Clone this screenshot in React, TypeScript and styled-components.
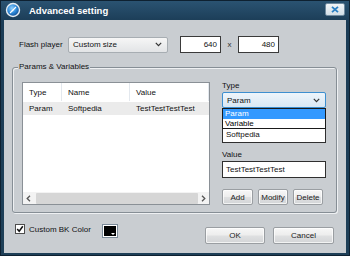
import React from 'react';
import styled, { createGlobalStyle } from 'styled-components';

const GlobalStyle = createGlobalStyle`
  html, body {
    margin: 0;
    padding: 0;
  }
  body {
    width: 350px;
    height: 256px;
    overflow: hidden;
    background: #1d3d55;
    font-family: "Liberation Sans", Arial, sans-serif;
    font-size: 8px;
    color: #111;
  }
`;

const Frame = styled.div`
  width: 350px;
  height: 256px;
  box-sizing: border-box;
  display: flex;
  flex-direction: column;
  background: linear-gradient(#2b5473, #1b3c56 22px, #1e3f57);
  box-shadow: inset 0 0 0 1px #0e2131;
`;

const TitleBar = styled.div`
  height: 20px;
  flex: none;
  display: flex;
  align-items: center;
  padding-left: 5px;
`;

const TitleText = styled.span`
  margin-left: 8px;
  color: #fff;
  font-size: 9.5px;
  font-weight: bold;
`;

const CloseButton = styled.div`
  margin-left: auto;
  margin-right: 5px;
  align-self: flex-start;
  margin-top: 3px;
  width: 20px;
  height: 13px;
  box-sizing: border-box;
  border: 1px solid #6f8a9f;
  border-radius: 2px;
  background: linear-gradient(#f1f5f8, #d2dee7);
  display: flex;
  align-items: center;
  justify-content: center;
`;

const Body = styled.div`
  flex: 1;
  margin: 0 4px 3px 4px;
  background: #c9cdd1;
  display: flex;
  flex-direction: column;
  padding-top: 16px;
`;

const TopRow = styled.div`
  display: flex;
  align-items: center;
  height: 17px;
  padding-left: 15px;
`;

const Label = styled.span<{ $width?: number }>`
  width: ${(p) => (p.$width ? `${p.$width}px` : 'auto')};
  white-space: nowrap;
  line-height: 11px;
`;

const LabelSpace = styled.div`
  height: 11px;
`;

const Combo = styled.div<{ $width: number; $focused?: boolean }>`
  width: ${(p) => p.$width}px;
  height: 16px;
  box-sizing: border-box;
  border: 1px solid ${(p) => (p.$focused ? '#3d8fd0' : '#a7adb2')};
  border-radius: 2px;
  background: ${(p) =>
    p.$focused ? 'linear-gradient(#eef5fb, #d9e8f4)' : 'linear-gradient(#f6f6f6, #e2e4e6)'};
  display: flex;
  align-items: center;
  padding: 0 5px 0 4px;
  justify-content: space-between;
`;

const NumInput = styled.div<{ $gapLeft?: number }>`
  width: 41px;
  height: 17px;
  margin-left: ${(p) => p.$gapLeft ?? 0}px;
  box-sizing: border-box;
  border: 1px solid #3a3a3a;
  background: #fff;
  display: flex;
  align-items: center;
  justify-content: flex-end;
  padding-right: 3px;
`;

const Times = styled.span`
  width: 17px;
  text-align: center;
  color: #333;
`;

const Group = styled.div`
  position: relative;
  margin: 14px 0 0 8px;
  width: 325px;
  height: 146px;
  box-sizing: border-box;
  border: 1px solid #868e95;
  border-radius: 3px;
  box-shadow: inset 1px 1px 0 #eef0f2, 1px 1px 0 #eef0f2;
  display: flex;
  align-items: flex-start;
  padding: 14px 0 0 9px;
`;

const Legend = styled.span`
  position: absolute;
  top: -6px;
  left: 5px;
  padding: 0 1px;
  background: #c9cdd1;
  line-height: 10px;
`;

const ListView = styled.div`
  width: 188px;
  height: 123px;
  box-sizing: border-box;
  border: 1px solid #8a9096;
  background: #fff;
  display: flex;
  flex-direction: column;
`;

const ListRow = styled.div<{ $header?: boolean }>`
  display: flex;
  height: ${(p) => (p.$header ? 18 : 13)}px;
  margin-top: ${(p) => (p.$header ? 0 : 1)}px;
  background: ${(p) => (p.$header ? '#fff' : '#ebebeb')};
  flex: none;
`;

const Cell = styled.div<{ $width: number; $header?: boolean }>`
  width: ${(p) => p.$width}px;
  flex: none;
  box-sizing: border-box;
  padding-left: 6px;
  display: flex;
  align-items: center;
  white-space: nowrap;
  overflow: hidden;
  border-right: ${(p) => (p.$header ? '1px solid #e3e8ee' : 'none')};
`;

const ListFill = styled.div`
  flex: 1;
`;

const HScroll = styled.div`
  height: 12px;
  flex: none;
  background: #f3f3f3;
  display: flex;
  align-items: center;
  padding: 0 3px;
`;

const Thumb = styled.div`
  flex: 1;
  height: 11px;
  margin: 0 3px 0 5px;
  background: #d6d6d6;
  border-radius: 1px;
`;

const RightCol = styled.div`
  width: 104px;
  margin-left: 12px;
  margin-top: -2px;
  display: flex;
  flex-direction: column;
`;

const Field = styled.div<{ $top?: number }>`
  position: relative;
  margin-top: ${(p) => p.$top ?? 0}px;
  display: flex;
  flex-direction: column;
  gap: 1px;
`;

const TextBox = styled.div`
  height: 17px;
  box-sizing: border-box;
  border: 1px solid #2f2f2f;
  background: #fff;
  display: flex;
  align-items: center;
  padding-left: 3px;
`;

const DropList = styled.div`
  position: absolute;
  left: 0;
  top: 28px;
  width: 104px;
  box-sizing: border-box;
  border: 1px solid #1a1a1a;
  background: #fff;
  z-index: 2;
`;

const DropItem = styled.div<{ $selected?: boolean }>`
  height: 9.5px;
  line-height: 9.5px;
  padding-left: 2px;
  background: ${(p) => (p.$selected ? '#3399ff' : '#fff')};
  color: ${(p) => (p.$selected ? '#fff' : '#000')};
`;

const ButtonRow = styled.div`
  display: flex;
  gap: 5px;
  margin-top: 11px;
`;

const Button = styled.div<{ $width: number; $height?: number }>`
  width: ${(p) => p.$width}px;
  height: ${(p) => p.$height ?? 16}px;
  box-sizing: border-box;
  border: 1px solid #9a9ea2;
  border-radius: 2px;
  background: linear-gradient(#f7f7f7 0%, #ededed 48%, #dfe0e1 52%, #d3d5d7 100%);
  box-shadow: inset 0 0 0 1px rgba(255, 255, 255, 0.7);
  display: flex;
  align-items: center;
  justify-content: center;
  color: #222;
`;

const BottomRow = styled.div`
  display: flex;
  align-items: flex-start;
  margin-top: 11px;
  padding: 0 12px 0 11px;
`;

const CheckGroup = styled.div`
  display: flex;
  align-items: center;
  height: 14px;
`;

const CheckBox = styled.div`
  width: 10px;
  height: 10px;
  box-sizing: border-box;
  border: 1px solid #4d4d4d;
  background: #fff;
  display: flex;
  align-items: center;
  justify-content: center;
  margin-top: -4px;
`;

const CheckLabel = styled.span`
  margin-left: 4px;
  margin-top: -3px;
`;

const Swatch = styled.div`
  position: relative;
  margin-left: 11px;
  width: 16px;
  height: 14px;
  box-sizing: border-box;
  border: 1px solid #7b8a98;
  background: #fff;
  padding: 1px;
`;

const SwatchFill = styled.div`
  width: 100%;
  height: 100%;
  background: #000;
`;

const SwatchArrow = styled.div`
  position: absolute;
  right: 2px;
  bottom: 2px;
  width: 0;
  height: 0;
  border-left: 2px solid transparent;
  border-right: 2px solid transparent;
  border-top: 2px solid #fff;
`;

const DialogButtons = styled.div`
  margin-left: auto;
  margin-top: 3px;
  display: flex;
  gap: 8px;
`;

const Chevron = () => (
  <svg width="7" height="5" viewBox="0 0 7 5">
    <path d="M0.8 0.8 L3.5 3.6 L6.2 0.8" fill="none" stroke="#333" strokeWidth="1.2" />
  </svg>
);

const AppIcon = () => (
  <svg width="16" height="16" viewBox="0 0 16 16">
    <defs>
      <radialGradient id="ig" cx="40%" cy="35%" r="70%">
        <stop offset="0%" stopColor="#8fd0ff" />
        <stop offset="60%" stopColor="#2b86d6" />
        <stop offset="100%" stopColor="#144f92" />
      </radialGradient>
    </defs>
    <circle cx="8" cy="8" r="7.2" fill="#e8eef3" />
    <circle cx="8" cy="8" r="5.8" fill="url(#ig)" />
    <path d="M5 11 L11 5" stroke="#fff" strokeWidth="1.1" />
    <path d="M5 11 L7.6 7.4 L8.6 8.4 Z" fill="#fff" />
  </svg>
);

const CloseGlyph = () => (
  <svg width="8" height="7" viewBox="0 0 8 7">
    <path d="M1 0.8 L7 6.2 M7 0.8 L1 6.2" stroke="#2a7fc4" strokeWidth="1.8" />
  </svg>
);

const CheckMark = () => (
  <svg width="8" height="8" viewBox="0 0 8 8">
    <path d="M1.2 4 L3.2 6.3 L6.8 1.2" fill="none" stroke="#111" strokeWidth="1.5" />
  </svg>
);

const ScrollArrow = ({ dir }: { dir: 'left' | 'right' }) => (
  <svg width="5" height="7" viewBox="0 0 5 7">
    <path
      d={dir === 'left' ? 'M4 0.8 L1.2 3.5 L4 6.2' : 'M1 0.8 L3.8 3.5 L1 6.2'}
      fill="none"
      stroke="#555"
      strokeWidth="1.3"
    />
  </svg>
);

const columns = [
  { key: 'type', title: 'Type', width: 39 },
  { key: 'name', title: 'Name', width: 68 },
  { key: 'value', title: 'Value', width: 79 },
];

const rows = [{ type: 'Param', name: 'Softpedia', value: 'TestTestTestTest' }];

const App: React.FC = () => (
  <>
    <GlobalStyle />
    <Frame>
      <TitleBar>
        <AppIcon />
        <TitleText>Advanced setting</TitleText>
        <CloseButton>
          <CloseGlyph />
        </CloseButton>
      </TitleBar>
      <Body>
        <TopRow>
          <Label $width={49}>Flash player</Label>
          <Combo $width={100}>
            <span>Custom size</span>
            <Chevron />
          </Combo>
          <NumInput $gapLeft={12}>640</NumInput>
          <Times>x</Times>
          <NumInput>480</NumInput>
        </TopRow>

        <Group>
          <Legend>Params &amp; Variables</Legend>
          <ListView>
            <ListRow $header>
              {columns.map((c) => (
                <Cell key={c.key} $width={c.width} $header>
                  {c.title}
                </Cell>
              ))}
            </ListRow>
            {rows.map((r, i) => (
              <ListRow key={i}>
                {columns.map((c) => (
                  <Cell key={c.key} $width={c.width}>
                    {r[c.key as keyof typeof r]}
                  </Cell>
                ))}
              </ListRow>
            ))}
            <ListFill />
            <HScroll>
              <ScrollArrow dir="left" />
              <Thumb />
              <ScrollArrow dir="right" />
            </HScroll>
          </ListView>

          <RightCol>
            <Field>
              <Label>Type</Label>
              <Combo $width={104} $focused>
                <span>Param</span>
                <Chevron />
              </Combo>
              <DropList>
                <DropItem $selected>Param</DropItem>
                <DropItem>Variable</DropItem>
              </DropList>
            </Field>
            <Field $top={6}>
              {/* the "Name" label sits under the open drop-down list */}
              <LabelSpace />
              <TextBox>Softpedia</TextBox>
            </Field>
            <Field $top={6}>
              <Label>Value</Label>
              <TextBox>TestTestTestTest</TextBox>
            </Field>
            <ButtonRow>
              <Button $width={31}>Add</Button>
              <Button $width={30}>Modify</Button>
              <Button $width={30}>Delete</Button>
            </ButtonRow>
          </RightCol>
        </Group>

        <BottomRow>
          <CheckGroup>
            <CheckBox>
              <CheckMark />
            </CheckBox>
            <CheckLabel>Custom BK Color</CheckLabel>
            <Swatch>
              <SwatchFill />
              <SwatchArrow />
            </Swatch>
          </CheckGroup>
          <DialogButtons>
            <Button $width={60} $height={17}>
              OK
            </Button>
            <Button $width={61} $height={17}>
              Cancel
            </Button>
          </DialogButtons>
        </BottomRow>
      </Body>
    </Frame>
  </>
);

export default App;
